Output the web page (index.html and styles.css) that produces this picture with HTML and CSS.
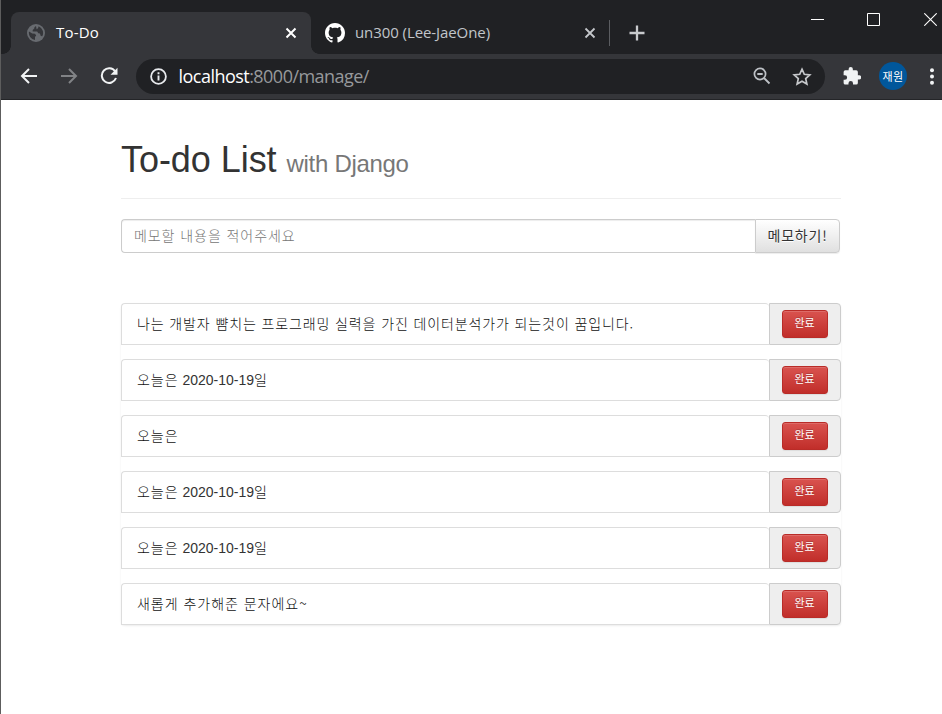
FILE: index.html
```html
<!DOCTYPE html>
<html lang="ko">
<head>
<meta charset="utf-8">
<title>To-Do</title>
<link rel="stylesheet" href="styles.css">
</head>
<body>
<div class="window">
  <header class="tabstrip">
    <div class="tab tab-active">
      <svg class="globe" width="18" height="18" viewBox="0 0 18 18"><circle cx="9" cy="9" r="9" fill="#686b70"/><path d="M2 7.5 5.2 9.6 8 9.8 9.2 11.5 8 13v3.1A7.2 7.2 0 0 1 2 7.5ZM9 1.9c-1 .8-2 1.500-1.700 2.700L5.700 6v1.500h4.500l1.100 1.800 1.600.2.900 2.500 1.500.3A7.200 7.200 0 0 0 11.600 2.300L11 4.300 9.600 5.300Z" fill="#35363a"/></svg>
      <span class="tab-title title-a">To-Do</span>
      <svg class="x" width="12" height="12" viewBox="0 0 12 12"><path d="m1.500 1.500 9 9m0-9-9 9" stroke="#fff" stroke-width="2"/></svg>
    </div>
    <div class="tab tab-idle">
      <svg class="github" width="20" height="20" viewBox="0 0 16 16"><path fill="#fff" d="M8 0C3.580 0 0 3.580 0 8c0 3.540 2.290 6.530 5.470 7.590.4.070.55-.17.55-.38 0-.19-.01-.82-.01-1.490-2.010.37-2.530-.49-2.690-.94-.09-.23-.48-.94-.82-1.130-.28-.15-.68-.52-.01-.53.63-.01 1.080.58 1.230.82.72 1.210 1.870.87 2.330.66.070-.52.28-.87.51-1.070-1.780-.2-3.640-.89-3.640-3.950 0-.87.31-1.590.82-2.150-.08-.2-.36-1.020.08-2.120 0 0 .67-.21 2.200.82.64-.18 1.320-.27 2-.27s1.360.09 2 .27c1.530-1.040 2.200-.82 2.200-.82.44 1.100.16 1.920.08 2.120.51.56.82 1.270.82 2.150 0 3.070-1.870 3.750-3.650 3.950.29.25.54.73.54 1.480 0 1.070-.01 1.930-.01 2.200 0 .21.15.46.55.38A8.010 8.010 0 0 0 16 8c0-4.420-3.580-8-8-8Z"/></svg>
      <span class="tab-title title-b">un300 (Lee-JaeOne)</span>
      <svg class="x" width="12" height="12" viewBox="0 0 12 12"><path d="m1.500 1.500 9 9m0-9-9 9" stroke="#c4c7cb" stroke-width="1.800"/></svg>
    </div>
    <svg class="newtab" width="16" height="16" viewBox="0 0 16 16"><path d="M8 .5v15M.5 8h15" stroke="#c8cacd" stroke-width="2.300"/></svg>
    <div class="controls">
      <svg width="13" height="13" viewBox="0 0 13 13"><path d="M0 6.500h13" stroke="#fff"/></svg>
      <svg width="13" height="13" viewBox="0 0 13 13"><path d="M.5.5h12v12H.5Z" fill="none" stroke="#fff"/></svg>
      <svg width="13" height="13" viewBox="0 0 13 13"><path d="m.3.3 12.400 12.400m0-12.400L.3 12.700" stroke="#fff" stroke-width="1.100"/></svg>
    </div>
  </header>
  <nav class="toolbar">
    <svg class="back" width="18" height="16" viewBox="0 0 18 16"><path d="M17 8H2m7-7L2 8l7 7" fill="none" stroke="#f1f3f4" stroke-width="2"/></svg>
    <svg class="forward" width="18" height="16" viewBox="0 0 18 16"><path d="M1 8h15M9 1l7 7-7 7" fill="none" stroke="#818386" stroke-width="2"/></svg>
    <svg class="reload" width="18" height="18" viewBox="0 0 18 18"><path d="M15.200 4.500A7.300 7.300 0 1 0 16 11" fill="none" stroke="#f1f3f4" stroke-width="2"/><path d="M17.500.8v7h-7Z" fill="#f1f3f4"/></svg>
    <div class="omnibox">
      <svg class="info" width="17" height="17" viewBox="0 0 17 17"><circle cx="8.500" cy="8.500" r="7.400" fill="none" stroke="#e8eaed" stroke-width="1.800"/><path d="M8.500 7.500v5m0-8.200v2" stroke="#e8eaed" stroke-width="1.900"/></svg>
      <span class="url"><span class="host">localhost</span>:8000/manage/</span>
      <svg class="lens" width="18" height="18" viewBox="0 0 18 18"><circle cx="7" cy="7" r="5.600" fill="none" stroke="#bdc1c6" stroke-width="1.700"/><path d="m11 11 5.500 5.500M4.300 7h5.400" stroke="#bdc1c6" stroke-width="1.800"/></svg>
      <svg class="star" width="20" height="19" viewBox="0 0 20 19"><path d="m10 2.200 2.300 5.100 5.500.6-4.100 3.700 1.200 5.400-4.900-2.800L5.100 17l1.200-5.400L2.200 7.900l5.500-.6Z" fill="none" stroke="#c6c8cb" stroke-width="1.700"/></svg>
    </div>
    <svg class="puzzle" width="18" height="18" viewBox="1.500 1 21 21.500"><path fill="#f1f3f4" d="M20.500 11H19V7a2 2 0 0 0-2-2h-4V3.500a2.500 2.500 0 0 0-5 0V5H4a2 2 0 0 0-2 2v3.800h1.500a2.700 2.700 0 0 1 0 5.400H2V20a2 2 0 0 0 2 2h3.800v-1.500a2.700 2.700 0 0 1 5.400 0V22H17a2 2 0 0 0 2-2v-4h1.500a2.500 2.500 0 0 0 0-5Z"/></svg>
    <span class="avatar">재원</span>
    <svg class="more" width="4" height="17" viewBox="0 0 4 17"><g fill="#f1f3f4"><circle cx="2" cy="2.200" r="2"/><circle cx="2" cy="8.500" r="2"/><circle cx="2" cy="14.800" r="2"/></g></svg>
  </nav>
  <main class="container">
    <h1 class="heading">To-do List <small>with Django</small></h1>
    <form class="memo">
      <input class="memo-input" type="text" placeholder="메모할 내용을 적어주세요">
      <button class="memo-button" type="button">메모하기!</button>
    </form>
    <ul class="list">
      <li class="item"><span class="text first"><span class="ko">나는 개발자 뺨치는 프로그래밍 실력을 가진 데이터분석가가 되는것이 꿈입니다.</span></span><span class="addon"><button class="done">완료</button></span></li>
      <li class="item"><span class="text"><span class="ko">오늘은</span> 2020-10-19<span class="ko">일</span></span><span class="addon"><button class="done">완료</button></span></li>
      <li class="item"><span class="text"><span class="ko">오늘은</span></span><span class="addon"><button class="done">완료</button></span></li>
      <li class="item"><span class="text"><span class="ko">오늘은</span> 2020-10-19<span class="ko">일</span></span><span class="addon"><button class="done">완료</button></span></li>
      <li class="item"><span class="text"><span class="ko">오늘은</span> 2020-10-19<span class="ko">일</span></span><span class="addon"><button class="done">완료</button></span></li>
      <li class="item"><span class="text"><span class="ko">새롭게 추가해준 문자에요~</span></span><span class="addon"><button class="done">완료</button></span></li>
    </ul>
  </main>
</div>
</body>
</html>
```
FILE: styles.css
```css
* { box-sizing: border-box; }
body { margin: 0; background: #fff; color: #333; font: 14px/20px "Liberation Sans", "Noto Sans CJK KR", sans-serif; overflow: hidden; }
svg { display: block; flex: none; }
.window { height: 714px; border-left: 1px solid #5d5d5d; }
.tabstrip { height: 54px; background: #202124; display: flex; align-items: flex-start; }
.tab { display: flex; align-items: center; height: 42px; margin-top: 12px; }
.tab-active { position: relative; width: 300px; margin-left: 10px; padding: 0 14px 0 16px; background: #35363a; border-radius: 8px 8px 0 0; }
.tab-active::before, .tab-active::after { content: ""; position: absolute; bottom: 0; width: 8px; height: 8px; }
.tab-active::before { left: -8px; background: radial-gradient(circle at 0 0, transparent 7.5px, #35363a 8px); }
.tab-active::after { right: -8px; background: radial-gradient(circle at 100% 0, transparent 7.5px, #35363a 8px); }
.tab-idle { width: 299px; padding: 0 13px 0 14px; border-right: 1px solid #5b5d61; height: 26px; margin-top: 20px; }
.tab-title { font: 15px/20px "Open Sans", "Noto Sans", sans-serif; white-space: nowrap; flex: 1; padding-bottom: 2px; }
.title-a { color: #fff; margin-left: 11px; letter-spacing: .2px; }
.title-b { color: #c1c5ca; margin-left: 10px; letter-spacing: -.08px; }
.newtab { margin: 25px 0 0 19px; }
.controls { display: flex; gap: 44px; margin: 13px 5px 0 auto; }
.controls svg:first-child { margin-right: -1px; }
.toolbar { height: 46px; background: #35363a; border-bottom: 1px solid #242528; display: flex; align-items: center; padding: 0 8px 1px 18.5px; }
.forward { margin-left: 22px; }
.reload { margin-left: 22px; }
.omnibox { display: flex; align-items: center; width: 689px; height: 35px; margin-left: 18.5px; padding: 0 13px 0 14px; border-radius: 18px; background: #202124; flex: none; }
.url { flex: 1; margin-left: 11.5px; color: #97999c; font: 18px/24px "Open Sans", "Noto Sans", sans-serif; letter-spacing: -.53px; white-space: nowrap; }
.host { color: #fff; }
.star { margin-left: 21px; }
.puzzle { margin-left: 18px; }
.avatar { width: 28px; height: 28px; margin: 0 23px 0 18px; border-radius: 50%; background: #01579b; color: #fff; font: 11px/28px "Noto Sans CJK KR", sans-serif; letter-spacing: .4px; text-align: center; flex: none; }
.container { width: 720px; margin-left: 120px; padding-top: 40px; }
.heading { margin: 0 0 20px; height: 59px; border-bottom: 1px solid #eee; font-size: 36px; font-weight: 400; line-height: 40px; letter-spacing: -.05px; }
.heading small { font-size: 24px; color: #777; letter-spacing: -.3px; }
.memo { display: flex; width: 719px; height: 34px; margin: 0; }
.memo-input { width: 634px; border: 1px solid #ccc; border-right: 0; border-radius: 4px 0 0 4px; padding: 0 12px 3px; font: 300 14px/20px "Noto Sans CJK KR", sans-serif; letter-spacing: .93px; box-shadow: inset 0 1px 1px rgba(0,0,0,.075); }
.memo-input::placeholder { color: #757575; opacity: 1; }
.memo-button { width: 85px; padding: 0 0 3px; border: 1px solid #ccc; border-radius: 0 4px 4px 0; background: linear-gradient(#fff, #e0e0e0); color: #333; font: 14px/20px "Noto Sans CJK KR", sans-serif; letter-spacing: .8px; text-shadow: 0 1px 0 #fff; box-shadow: 0 1px 1px rgba(0,0,0,.075); white-space: nowrap; }
.list { list-style: none; padding: 0; margin: 50px 0 0; display: flex; flex-direction: column; gap: 14px; border-radius: 4px; box-shadow: 0 1px 2px rgba(0,0,0,.075); }
.item { display: flex; height: 42px; }
.text { width: 648px; padding: 9px 15px; background: #fff; border: 1px solid #ddd; border-right: 0; border-radius: 4px 4px 0 0; white-space: nowrap; }
.ko { font: 300 14px/20px "Noto Sans CJK KR", sans-serif; letter-spacing: .97px; color: #111; }
.first .ko { letter-spacing: .88px; }
.addon { width: 72px; border: 1px solid #ccc; border-radius: 0 4px 4px 0; background: #eee; display: flex; align-items: center; justify-content: center; }
.done { width: 46px; height: 28px; padding: 0 1px 5px 0; border: 1px solid #b92c28; border-radius: 3px; background: linear-gradient(#d9534f, #c12e2a); color: #fff; font: 11px/18px "Noto Sans CJK KR", sans-serif; text-shadow: 0 -1px 0 rgba(0,0,0,.2); box-shadow: inset 0 1px 0 rgba(255,255,255,.15), 0 1px 1px rgba(0,0,0,.075); }
```
